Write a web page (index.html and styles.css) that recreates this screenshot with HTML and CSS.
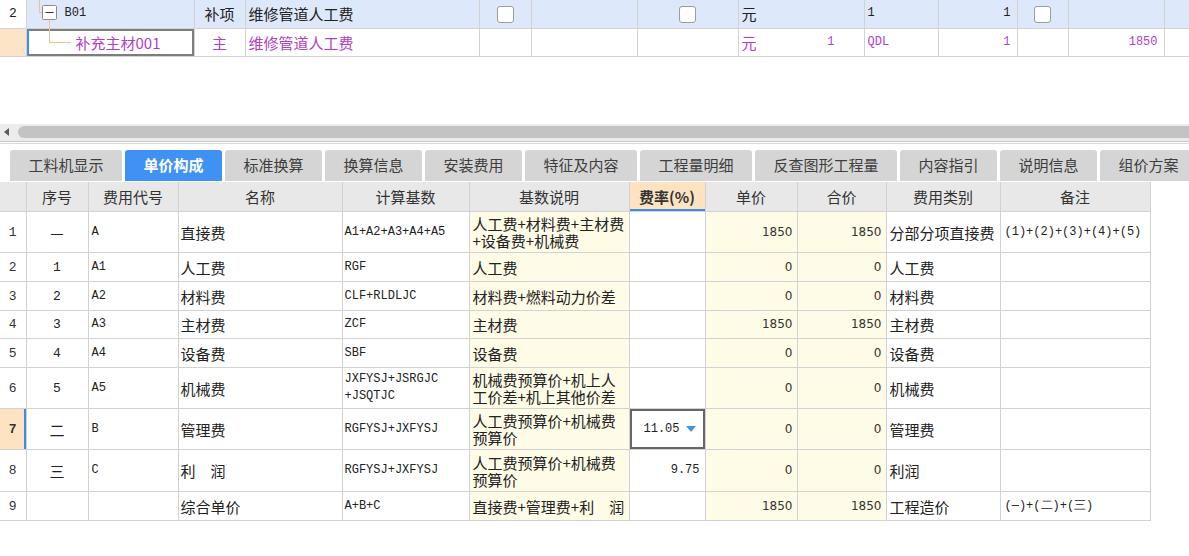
FILE: index.html
```html
<!DOCTYPE html>
<html lang="zh">
<head>
<meta charset="utf-8">
<title>单价构成</title>
<link rel="stylesheet" href="styles.css">
</head>
<body>
<table class="grid top">
  <colgroup>
    <col style="width:26px"><col style="width:168px"><col style="width:51px"><col style="width:234px"><col style="width:52px"><col style="width:106px"><col style="width:101px"><col style="width:126px"><col style="width:74px"><col style="width:79px"><col style="width:51px"><col style="width:96px"><col style="width:25px">
  </colgroup>
  <tr class="r-parent">
    <td class="rn mono">2</td>
    <td class="tree"><div class="tree-in"><svg class="tree-svg" width="37" height="28" viewBox="27 0 37 28"><path d="M39.5 0V12.5H42" stroke="#f5c08c" fill="none"/><rect x="42.5" y="5.5" width="14" height="14" rx="1" fill="#fff" stroke="#8a8a8a"/><path d="M45.5 12.5H53.5" stroke="#333"/><path d="M49.5 19.5V28" stroke="#f5c08c"/></svg><span class="mono">B01</span></div></td>
    <td class="ctr">补项</td>
    <td class="pl">维修管道人工费</td>
    <td class="ctr"><span class="chk"></span></td>
    <td></td>
    <td class="ctr"><span class="chk"></span></td>
    <td class="pl">元</td>
    <td class="pl mono">1</td>
    <td class="pr mono">1</td>
    <td class="ctr"><span class="chk"></span></td>
    <td></td>
    <td></td>
  </tr>
  <tr class="r-child">
    <td class="rn sel-rn"></td>
    <td class="tree sel"><div class="tree-in"><svg class="tree-svg" width="48" height="27" viewBox="27 29 48 27"><path d="M49.5 29V42.5H71" stroke="#f5c08c" fill="none"/></svg><span>补充主材001</span></div></td>
    <td class="ctr">主</td>
    <td class="pl">维修管道人工费</td>
    <td></td>
    <td></td>
    <td></td>
    <td class="pl"><div class="split"><span>元</span><span class="mono qty">1</span></div></td>
    <td class="pl mono">QDL</td>
    <td class="pr mono">1</td>
    <td></td>
    <td class="pr mono">1850</td>
    <td></td>
  </tr>
</table>

<div class="hscroll"><span class="arrow"></span><span class="thumb"></span></div>
<div class="sep"></div>

<div class="tabs">
  <div class="tab w112">工料机显示</div>
  <div class="tab w97 active">单价构成</div>
  <div class="tab w97">标准换算</div>
  <div class="tab w97">换算信息</div>
  <div class="tab w97">安装费用</div>
  <div class="tab w112">特征及内容</div>
  <div class="tab w112">工程量明细</div>
  <div class="tab w142">反查图形工程量</div>
  <div class="tab w97">内容指引</div>
  <div class="tab w97">说明信息</div>
  <div class="tab w97">组价方案</div>
</div>

<table class="grid price">
  <colgroup>
    <col style="width:26px"><col style="width:62px"><col style="width:90px"><col style="width:164px"><col style="width:127px"><col style="width:160px"><col style="width:76px"><col style="width:92px"><col style="width:89px"><col style="width:114px"><col style="width:150px">
  </colgroup>
  <tr class="head">
    <th></th><th>序号</th><th>费用代号</th><th>名称</th><th>计算基数</th><th>基数说明</th><th class="rate-h">费率(%)</th><th>单价</th><th>合价</th><th>费用类别</th><th>备注</th>
  </tr>
  <tr class="h41">
    <td class="rn mono">1</td><td class="ctr">—</td><td class="code mono">A</td><td class="name">直接费</td><td class="base mono">A1+A2+A3+A4+A5</td>
    <td class="desc">人工费+材料费+主材费<br>+设备费+机械费</td><td class="rate"></td><td class="num cream">1850</td><td class="num cream">1850</td><td class="type">分部分项直接费</td><td class="note mono">(1)+(2)+(3)+(4)+(5)</td>
  </tr>
  <tr class="h29">
    <td class="rn mono">2</td><td class="ctr mono">1</td><td class="code mono">A1</td><td class="name">人工费</td><td class="base mono">RGF</td>
    <td class="desc">人工费</td><td class="rate"></td><td class="num cream">0</td><td class="num cream">0</td><td class="type">人工费</td><td class="note"></td>
  </tr>
  <tr class="h29">
    <td class="rn mono">3</td><td class="ctr mono">2</td><td class="code mono">A2</td><td class="name">材料费</td><td class="base mono">CLF+RLDLJC</td>
    <td class="desc">材料费+燃料动力价差</td><td class="rate"></td><td class="num cream">0</td><td class="num cream">0</td><td class="type">材料费</td><td class="note"></td>
  </tr>
  <tr class="h28">
    <td class="rn mono">4</td><td class="ctr mono">3</td><td class="code mono">A3</td><td class="name">主材费</td><td class="base mono">ZCF</td>
    <td class="desc">主材费</td><td class="rate"></td><td class="num cream">1850</td><td class="num cream">1850</td><td class="type">主材费</td><td class="note"></td>
  </tr>
  <tr class="h29">
    <td class="rn mono">5</td><td class="ctr mono">4</td><td class="code mono">A4</td><td class="name">设备费</td><td class="base mono">SBF</td>
    <td class="desc">设备费</td><td class="rate"></td><td class="num cream">0</td><td class="num cream">0</td><td class="type">设备费</td><td class="note"></td>
  </tr>
  <tr class="h41">
    <td class="rn mono">6</td><td class="ctr mono">5</td><td class="code mono">A5</td><td class="name">机械费</td><td class="base mono">JXFYSJ+JSRGJC<br>+JSQTJC</td>
    <td class="desc">机械费预算价+机上人<br>工价差+机上其他价差</td><td class="rate"></td><td class="num cream">0</td><td class="num cream">0</td><td class="type">机械费</td><td class="note"></td>
  </tr>
  <tr class="h41">
    <td class="rn mono cur">7</td><td class="ctr">二</td><td class="code mono">B</td><td class="name">管理费</td><td class="base mono">RGFYSJ+JXFYSJ</td>
    <td class="desc">人工费预算价+机械费<br>预算价</td><td class="rate editing"><div class="edit"><span class="mono">11.05</span><span class="drop"></span></div></td><td class="num cream">0</td><td class="num cream">0</td><td class="type">管理费</td><td class="note"></td>
  </tr>
  <tr class="h42">
    <td class="rn mono">8</td><td class="ctr">三</td><td class="code mono">C</td><td class="name">利　润</td><td class="base mono">RGFYSJ+JXFYSJ</td>
    <td class="desc">人工费预算价+机械费<br>预算价</td><td class="rate mono">9.75</td><td class="num cream">0</td><td class="num cream">0</td><td class="type">利润</td><td class="note"></td>
  </tr>
  <tr class="h29">
    <td class="rn mono">9</td><td></td><td></td><td class="name">综合单价</td><td class="base mono">A+B+C</td>
    <td class="desc">直接费+管理费+利　润</td><td class="rate"></td><td class="num cream">1850</td><td class="num cream">1850</td><td class="type">工程造价</td><td class="note mono">(—)+(二)+(三)</td>
  </tr>
</table>
</body>
</html>
```

FILE: styles.css
```css
* { box-sizing: border-box; }
html, body { margin: 0; background: #fff; }
body {
  width: 1189px;
  height: 556px;
  overflow: hidden;
  font-family: "Noto Sans CJK SC", "Noto Sans", sans-serif;
  font-size: 15px;
  color: #222;
}
.mono { font-family: "Liberation Mono", "DejaVu Sans Mono", monospace; font-size: 12px; }

table.grid { border-collapse: collapse; table-layout: fixed; }
.grid td, .grid th {
  padding: 0;
  line-height: 17px;
  white-space: nowrap;
  overflow: hidden;
  border: 1px solid #d2d2d2;
  font-weight: normal;
}

/* top grid */
.top { width: 1189px; }
.top td { height: 28px; border-top: none; }
.top tr td:first-child { border-left: none; }
.r-parent td { background: #dde8fa; }
.r-parent td.rn { background: #fff; }
.r-child td { color: #b13fc6; }
.top .rn { text-align: left; padding-left: 9px; font-size: 13px; color: #222; }
.sel-rn { background: #fde4c6 !important; }
.ctr { text-align: center; }
.pl { padding-left: 3px !important; }
.pr { padding-right: 6px !important; text-align: right; }
.tree { padding: 0 !important; }
.tree-in { display: flex; align-items: center; height: 27px; }
.tree-svg { display: block; flex: none; align-self: stretch; }
.tree-in span { padding-left: 1px; }
.sel { box-shadow: inset 2px 0 0 #3c8ee8, inset 0 0 0 2px #7d7d7d; }
.chk {
  display: inline-block;
  width: 17px;
  height: 17px;
  border: 1px solid #9c9c9c;
  border-radius: 3px;
  background: #fff;
  vertical-align: middle;
}
.split { display: flex; align-items: center; }
.qty { margin-left: auto; padding-right: 29px; }

/* scrollbar */
.hscroll {
  margin-top: 67px;
  height: 17px;
  background: #ececec;
  display: flex;
  align-items: center;
  padding-left: 4px;
}
.arrow {
  width: 0; height: 0;
  border-right: 5px solid #5a5a5a;
  border-top: 4px solid transparent;
  border-bottom: 4px solid transparent;
}
.thumb {
  flex: 1;
  height: 12px;
  margin-left: 9px;
  background: #c3c3c3;
  border-radius: 6px 0 0 6px;
}
.sep { height: 3px; border-top: 1px solid #c8c8c8; border-bottom: 1px solid #d8d8d8; }

/* tabs */
.tabs { display: flex; gap: 3px; padding: 6px 0 0 10px; height: 38px; }
.tab {
  flex: none;
  height: 31px;
  background: #d5d5d5;
  border-radius: 3px 3px 0 0;
  color: #3e3e3e;
  display: flex;
  align-items: center;
  justify-content: center;
  line-height: 16px;
}
.tab.active { background: #3f92f4; color: #fff; font-weight: bold; }
.w97 { width: 97px; }
.w112 { width: 112px; }
.w142 { width: 142px; }

/* price table */
.price { width: 1150px; }
.price th { background: #e8e8e8; height: 30px; color: #333; text-align: center; border-top: none; }
.price th.rate-h { background: #fde3c2; font-weight: bold; box-shadow: inset 0 -2px 0 #3d8de6; }
.price tr td:first-child, .price tr th:first-child { border-left: none; }
.h41 td { height: 41px; }
.h42 td { height: 42px; }
.h29 td { height: 29px; }
.h28 td { height: 28px; }
.price .rn { text-align: center; font-size: 13px; color: #333; }
.price .rn.cur { background: #fde3c2; font-weight: bold; box-shadow: inset -2px 0 0 #3d8de6; }
.price .ctr.mono { font-size: 13px; }
.code { padding-left: 3px !important; }
.name { padding-left: 2px !important; }
.base { padding-left: 2px !important; }
.desc { padding-left: 3px !important; background: #fefbe6; }
.rate { text-align: right; padding-right: 5px !important; }
.num { text-align: right; padding-right: 4px !important; font-family: "DejaVu Sans", sans-serif; font-size: 12px; color: #333; }
.cream { background: #fefbe6; }
.type { padding-left: 3px !important; }
.note { padding-left: 4px !important; }
.editing { padding: 0 !important; box-shadow: inset 0 0 0 2px #666; }
.edit { display: flex; align-items: center; justify-content: flex-end; gap: 6px; padding-right: 9px; }
.drop {
  width: 0; height: 0;
  border-top: 6px solid #4a93dc;
  border-left: 5px solid transparent;
  border-right: 5px solid transparent;
}
```
